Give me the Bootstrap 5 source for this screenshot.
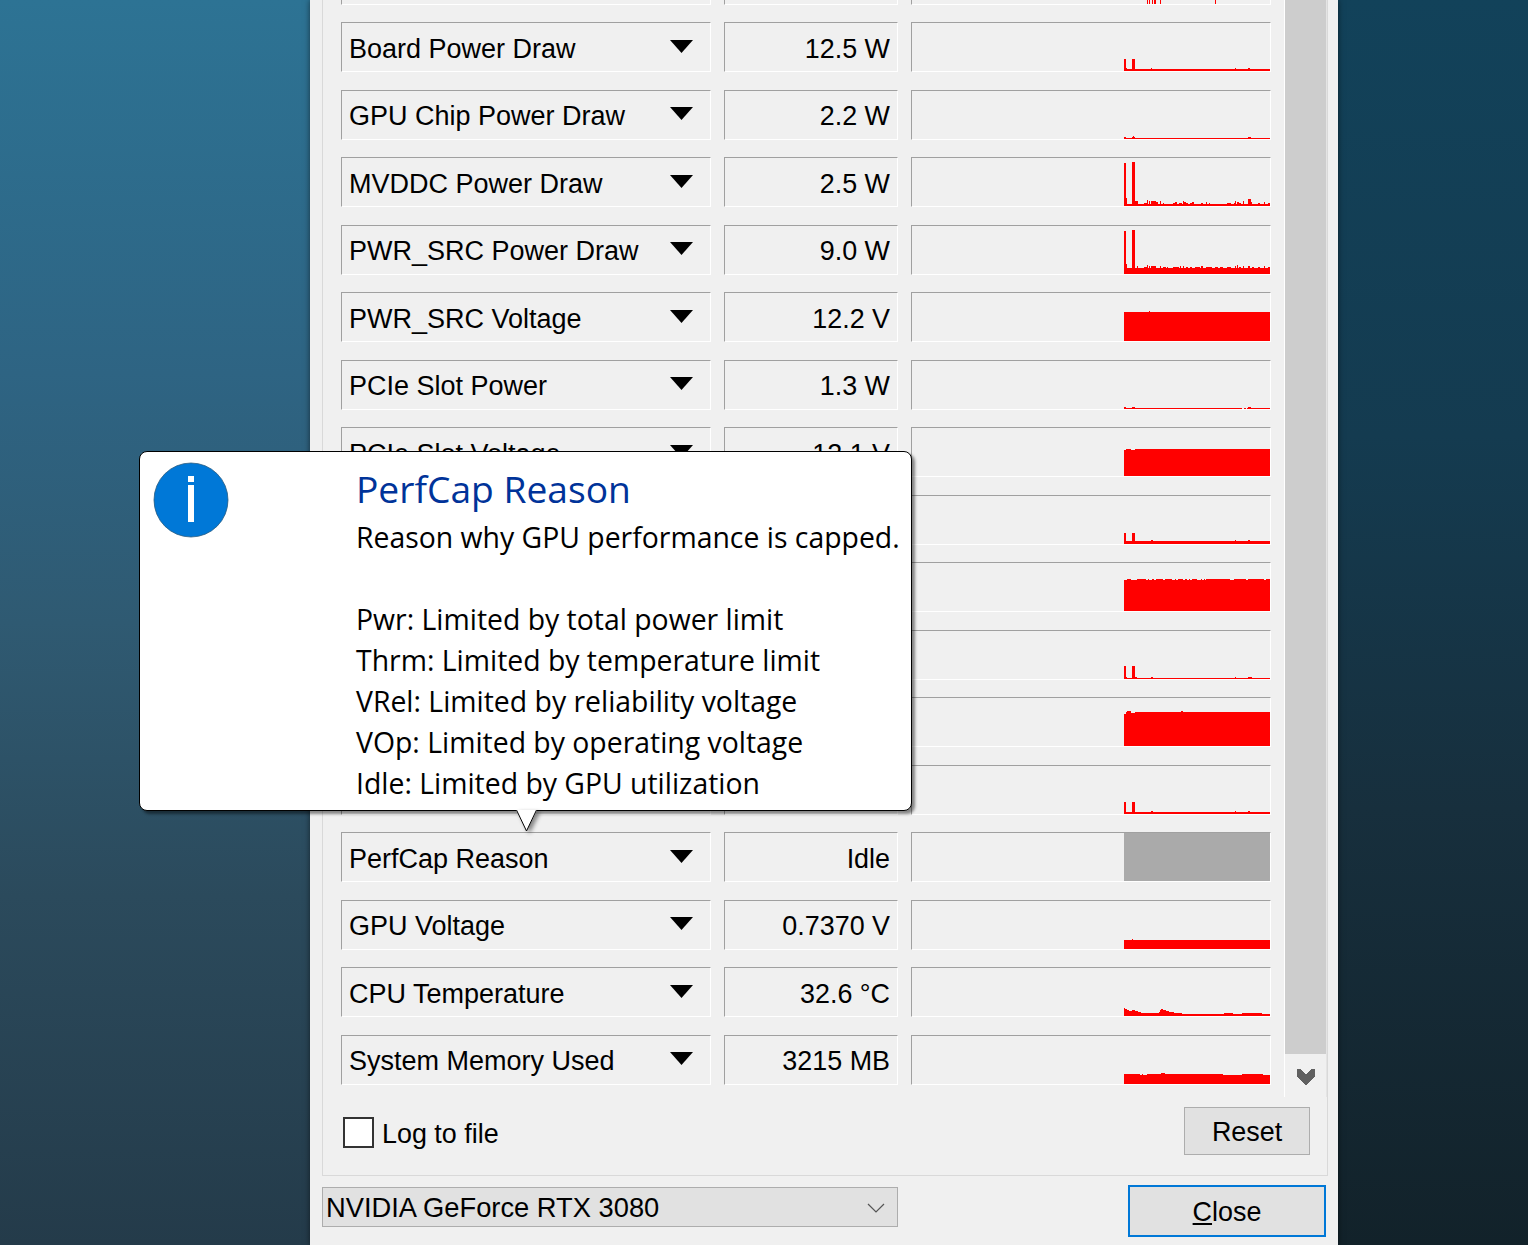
<!DOCTYPE html>
<html lang="en">
<head>
<meta charset="utf-8">
<title>GPU-Z Sensors</title>
<link href="https://cdn.jsdelivr.net/npm/bootstrap@5.3.0/dist/css/bootstrap.min.css" rel="stylesheet">
<style>
html,body{height:1245px;overflow:hidden}
body{font-family:"Liberation Sans",Arial,sans-serif;font-size:26.9px;color:#000;position:relative;
background:linear-gradient(180deg,#2d7394 0%,#2e6483 30%,#2f5a72 50%,#2b4a5c 72%,#243b4a 100%);}
.side-right{position:absolute;left:1338px;top:0;width:190px;height:1245px;background:linear-gradient(180deg,#12425a 0%,#143b50 35%,#172f3d 65%,#12222a 100%)}
.gpu-window{position:absolute;left:310px;top:0;width:1028px;height:1245px;background:#f0f0f0;overflow:hidden;box-shadow:0 0 6px rgba(0,0,0,.55)}
.group-box{margin:0 10px 0 12px;height:1176px;border:solid #d9d9d9;border-width:0 1px 1px 1px;overflow:hidden}
.scroll-zone{height:1097px;overflow:hidden}
.sensor-list{flex:1 1 auto;padding-left:18px;margin-top:-45.5px;gap:17.5px}
.sensor-line{height:50px;flex:none;gap:13px}
.s-cell{height:50px;border-top:1px solid #a0a0a0;border-left:1px solid #a0a0a0;border-right:1px solid #fff;border-bottom:1px solid #fff;flex:none;line-height:1}
.s-name{width:370px;padding:4px 17px 0 7px;font-size:27px}
.s-name svg{margin-bottom:6px}
.s-val{width:174px;padding:4px 7px 0 0}
.s-graph{width:360px;padding:0}
.s-graph svg{display:block}
.fake-scroll{width:43px;border-left:1px solid #fff;border-right:1px solid #e4e4e4;flex:none}
.fake-thumb{height:1054px;background:#cdcdcd}
.fake-arrow{height:43px;padding-top:15px}
.tool-row{height:78px;padding:10px 17px 0 20px}
.form-check .log-box{width:31px;height:31px;border:2px solid #333;border-radius:0;background-color:#fff;margin:10px 0 0 0;flex:none}
.log-label{margin-top:7px}
.gpu-btn{background:#e1e1e1;border:1px solid #adadad;border-radius:0;color:#000;font-size:26.9px;font-family:inherit;padding:3px 0 0;line-height:1}
.reset-btn{width:126px;height:48px}
.foot-row{padding:9px 12px 0 12px}
.gpu-combo{width:576px;height:40px;background:#e1e1e1;border:1px solid #adadad;padding:2px 12px 0 3px;margin-top:2px;line-height:1;font-size:27.3px}
.close-btn{width:198px;height:52px;border:2px solid #0078d7;margin-left:auto}
.close-btn:hover{background:#e1e1e1}
.perf-tip{position:absolute;left:139px;top:451px;width:773px;height:360px;background:#fff;border:1px solid #000;border-radius:8px;box-shadow:3px 3px 3px rgba(0,0,0,.45);font-family:"Open Sans","Noto Sans",sans-serif;z-index:5}
.tip-icon{position:absolute;left:13px;top:10px}
.tip-body{position:absolute;left:216px;top:11px;white-space:nowrap}
.tip-title{font-size:37.2px;line-height:52px;color:#003399;margin-bottom:2px}
.tip-text{font-size:28.38px;line-height:41px;color:#000}
.tip-tail{position:absolute;left:375px;top:358px;filter:drop-shadow(3px 2px 2px rgba(0,0,0,.45))}
</style>
</head>
<body>
<div class="side-right"></div>
<div class="gpu-window d-flex flex-column">
 <div class="group-box d-flex flex-column">
  <div class="scroll-zone d-flex flex-row">
   <div class="sensor-list d-flex flex-column">

    <div class="sensor-line d-flex">
     <div class="s-cell s-name"></div>
     <div class="s-cell s-val"></div>
     <div class="s-cell s-graph d-flex justify-content-end align-items-end"><svg width="146" height="48" shape-rendering="crispEdges"><path fill="#f00" d="M23 48v-5h1v5zM25 48v-5h1v5zM28 48v-5h1v5zM30 48v-4h2v4zM36 48v-5h1v5zM91 48v-5h1v5z"/></svg></div>
    </div>

    <div class="sensor-line d-flex">
     <div class="s-cell s-name d-flex align-items-center justify-content-between"><span>Board Power Draw</span><svg width="23" height="13"><polygon points="0,0 23,0 11.5,13"/></svg></div>
     <div class="s-cell s-val d-flex align-items-center justify-content-end">12.5 W</div>
     <div class="s-cell s-graph d-flex justify-content-end align-items-end"><svg width="146" height="48" shape-rendering="crispEdges"><path fill="#f00" d="M0 48v-2h146v2zM0 48v-12h2v12zM2 48v-3h1v3zM8 48v-12h3v12zM27 48v-3h1v3zM111 48v-3h1v3zM124 48v-3h2v3z"/></svg></div>
    </div>

    <div class="sensor-line d-flex">
     <div class="s-cell s-name d-flex align-items-center justify-content-between"><span>GPU Chip Power Draw</span><svg width="23" height="13"><polygon points="0,0 23,0 11.5,13"/></svg></div>
     <div class="s-cell s-val d-flex align-items-center justify-content-end">2.2 W</div>
     <div class="s-cell s-graph d-flex justify-content-end align-items-end"><svg width="146" height="48" shape-rendering="crispEdges"><path fill="#f00" d="M0 48v-1h146v1zM0 48v-2h2v2zM8 48v-2h3v2zM9 48v-3h1v3zM124 48v-2h3v2z"/></svg></div>
    </div>

    <div class="sensor-line d-flex">
     <div class="s-cell s-name d-flex align-items-center justify-content-between"><span>MVDDC Power Draw</span><svg width="23" height="13"><polygon points="0,0 23,0 11.5,13"/></svg></div>
     <div class="s-cell s-val d-flex align-items-center justify-content-end">2.5 W</div>
     <div class="s-cell s-graph d-flex justify-content-end align-items-end"><svg width="146" height="48" shape-rendering="crispEdges"><path fill="#f00" d="M0 48v-2h146v2zM0 48v-43h2v43zM2 48v-8h1v8zM8 48v-44h3v44zM11 48v-5h2v5zM13 48v-5h1v5zM20 48v-3h3v3zM23 48v-6h1v6zM25 48v-5h1v5zM27 48v-5h5v5zM32 48v-4h2v4zM36 48v-5h1v5zM39 48v-3h1v3zM49 48v-3h2v3zM51 48v-4h2v4zM55 48v-3h3v3zM59 48v-5h1v5zM60 48v-4h2v4zM62 48v-3h2v3zM66 48v-3h2v3zM68 48v-4h2v4zM77 48v-3h2v3zM82 48v-4h1v4zM85 48v-3h1v3zM103 48v-3h4v3zM110 48v-3h2v3zM111 48v-5h1v5zM113 48v-4h2v4zM115 48v-3h2v3zM119 48v-5h1v5zM124 48v-7h3v7zM127 48v-4h1v4zM134 48v-3h2v3zM140 48v-4h1v4zM144 48v-3h2v3z"/></svg></div>
    </div>

    <div class="sensor-line d-flex">
     <div class="s-cell s-name d-flex align-items-center justify-content-between"><span>PWR_SRC Power Draw</span><svg width="23" height="13"><polygon points="0,0 23,0 11.5,13"/></svg></div>
     <div class="s-cell s-val d-flex align-items-center justify-content-end">9.0 W</div>
     <div class="s-cell s-graph d-flex justify-content-end align-items-end"><svg width="146" height="48" shape-rendering="crispEdges"><path fill="#f00" d="M0 48v-6h146v6zM0 48v-43h2v43zM2 48v-10h1v10zM8 48v-44h3v44zM13 48v-8h1v8zM20 48v-7h3v7zM23 48v-9h1v9zM25 48v-8h1v8zM27 48v-8h5v8zM36 48v-8h1v8zM39 48v-7h3v7zM43 48v-7h1v7zM49 48v-7h6v7zM56 48v-8h1v8zM59 48v-8h1v8zM62 48v-7h2v7zM66 48v-7h2v7zM71 48v-7h5v7zM77 48v-8h2v8zM82 48v-7h6v7zM91 48v-7h3v7zM96 48v-7h3v7zM103 48v-7h4v7zM111 48v-8h1v8zM113 48v-9h1v9zM115 48v-7h2v7zM119 48v-8h1v8zM124 48v-8h2v8zM128 48v-7h2v7zM134 48v-7h2v7zM140 48v-8h1v8zM144 48v-7h2v7z"/></svg></div>
    </div>

    <div class="sensor-line d-flex">
     <div class="s-cell s-name d-flex align-items-center justify-content-between"><span>PWR_SRC Voltage</span><svg width="23" height="13"><polygon points="0,0 23,0 11.5,13"/></svg></div>
     <div class="s-cell s-val d-flex align-items-center justify-content-end">12.2 V</div>
     <div class="s-cell s-graph d-flex justify-content-end align-items-end"><svg width="146" height="48" shape-rendering="crispEdges"><path fill="#f00" d="M0 48v-29h146v29zM25 48v-30h1v30z"/></svg></div>
    </div>

    <div class="sensor-line d-flex">
     <div class="s-cell s-name d-flex align-items-center justify-content-between"><span>PCIe Slot Power</span><svg width="23" height="13"><polygon points="0,0 23,0 11.5,13"/></svg></div>
     <div class="s-cell s-val d-flex align-items-center justify-content-end">1.3 W</div>
     <div class="s-cell s-graph d-flex justify-content-end align-items-end"><svg width="146" height="48" shape-rendering="crispEdges"><path fill="#f00" d="M0 48v-1h118v1zM120 48v-1h2v1zM123 48v-1h23v1zM0 48v-2h2v2zM8 48v-2h3v2zM124 48v-2h3v2z"/></svg></div>
    </div>

    <div class="sensor-line d-flex">
     <div class="s-cell s-name d-flex align-items-center justify-content-between"><span>PCIe Slot Voltage</span><svg width="23" height="13"><polygon points="0,0 23,0 11.5,13"/></svg></div>
     <div class="s-cell s-val d-flex align-items-center justify-content-end">12.1 V</div>
     <div class="s-cell s-graph d-flex justify-content-end align-items-end"><svg width="146" height="48" shape-rendering="crispEdges"><path fill="#f00" d="M0 48v-26h146v26zM2 48v-27h5v27zM11 48v-27h135v27z"/></svg></div>
    </div>

    <div class="sensor-line d-flex">
     <div class="s-cell s-name"></div><div class="s-cell s-val"></div>
     <div class="s-cell s-graph d-flex justify-content-end align-items-end"><svg width="146" height="48" shape-rendering="crispEdges"><path fill="#f00" d="M0 48v-3h146v3zM0 48v-11h2v11zM8 48v-11h3v11zM27 48v-4h2v4zM111 48v-4h1v4zM124 48v-4h2v4z"/></svg></div>
    </div>

    <div class="sensor-line d-flex">
     <div class="s-cell s-name"></div><div class="s-cell s-val"></div>
     <div class="s-cell s-graph d-flex justify-content-end align-items-end"><svg width="146" height="48" shape-rendering="crispEdges"><path fill="#f00" d="M0 48v-31h146v31zM3 48v-32h4v32zM13 48v-32h9v32zM24 48v-32h1v32zM28 48v-32h2v32zM32 48v-32h7v32zM41 48v-32h7v32zM51 48v-32h1v32zM54 48v-32h5v32zM61 48v-32h2v32zM65 48v-32h1v32zM68 48v-32h5v32zM77 48v-32h1v32zM80 48v-32h1v32zM82 48v-32h24v32zM110 48v-32h12v32zM124 48v-32h16v32zM142 48v-32h4v32z"/></svg></div>
    </div>

    <div class="sensor-line d-flex">
     <div class="s-cell s-name"></div><div class="s-cell s-val"></div>
     <div class="s-cell s-graph d-flex justify-content-end align-items-end"><svg width="146" height="48" shape-rendering="crispEdges"><path fill="#f00" d="M0 48v-1h146v1zM0 48v-13h2v13zM2 48v-2h1v2zM8 48v-13h3v13zM11 48v-2h2v2zM27 48v-2h2v2zM111 48v-2h1v2zM124 48v-2h4v2z"/></svg></div>
    </div>

    <div class="sensor-line d-flex">
     <div class="s-cell s-name"></div><div class="s-cell s-val"></div>
     <div class="s-cell s-graph d-flex justify-content-end align-items-end"><svg width="146" height="48" shape-rendering="crispEdges"><path fill="#f00" d="M0 48v-32h2v32zM2 48v-34h1v34zM3 48v-35h4v35zM7 48v-33h4v33zM11 48v-34h135v34zM57 48v-35h2v35z"/></svg></div>
    </div>

    <div class="sensor-line d-flex">
     <div class="s-cell s-name"></div><div class="s-cell s-val"></div>
     <div class="s-cell s-graph d-flex justify-content-end align-items-end"><svg width="146" height="48" shape-rendering="crispEdges"><path fill="#f00" d="M0 48v-2h146v2zM0 48v-12h2v12zM8 48v-12h3v12zM27 48v-3h2v3zM111 48v-3h1v3zM124 48v-3h2v3z"/></svg></div>
    </div>

    <div class="sensor-line d-flex">
     <div class="s-cell s-name d-flex align-items-center justify-content-between"><span>PerfCap Reason</span><svg width="23" height="13"><polygon points="0,0 23,0 11.5,13"/></svg></div>
     <div class="s-cell s-val d-flex align-items-center justify-content-end">Idle</div>
     <div class="s-cell s-graph d-flex justify-content-end align-items-end"><svg width="146" height="48" shape-rendering="crispEdges"><rect width="146" height="48" fill="#aaa"/></svg></div>
    </div>

    <div class="sensor-line d-flex">
     <div class="s-cell s-name d-flex align-items-center justify-content-between"><span>GPU Voltage</span><svg width="23" height="13"><polygon points="0,0 23,0 11.5,13"/></svg></div>
     <div class="s-cell s-val d-flex align-items-center justify-content-end">0.7370 V</div>
     <div class="s-cell s-graph d-flex justify-content-end align-items-end"><svg width="146" height="48" shape-rendering="crispEdges"><path fill="#f00" d="M0 48v-9h146v9zM8 48v-10h1v10z"/></svg></div>
    </div>

    <div class="sensor-line d-flex">
     <div class="s-cell s-name d-flex align-items-center justify-content-between"><span>CPU Temperature</span><svg width="23" height="13"><polygon points="0,0 23,0 11.5,13"/></svg></div>
     <div class="s-cell s-val d-flex align-items-center justify-content-end">32.6 °C</div>
     <div class="s-cell s-graph d-flex justify-content-end align-items-end"><svg width="146" height="48" shape-rendering="crispEdges"><path fill="#f00" d="M0 48v-8h1v8zM1 48v-7h2v7zM3 48v-6h2v6zM5 48v-5h3v5zM8 48v-6h3v6zM11 48v-5h3v5zM14 48v-4h3v4zM17 48v-3h18v3zM35 48v-4h1v4zM36 48v-6h1v6zM37 48v-7h2v7zM39 48v-6h3v6zM42 48v-5h3v5zM45 48v-4h5v4zM50 48v-3h8v3zM58 48v-2h88v2zM100 48v-3h9v3zM118 48v-3h20v3z"/></svg></div>
    </div>

    <div class="sensor-line d-flex">
     <div class="s-cell s-name d-flex align-items-center justify-content-between"><span>System Memory Used</span><svg width="23" height="13"><polygon points="0,0 23,0 11.5,13"/></svg></div>
     <div class="s-cell s-val d-flex align-items-center justify-content-end">3215 MB</div>
     <div class="s-cell s-graph d-flex justify-content-end align-items-end"><svg width="146" height="48" shape-rendering="crispEdges"><path fill="#f00" d="M0 48v-10h16v10zM16 48v-9h2v9zM18 48v-10h1v10zM19 48v-9h4v9zM23 48v-10h14v10zM37 48v-11h4v11zM41 48v-10h58v10zM99 48v-9h19v9zM118 48v-10h21v10zM139 48v-9h7v9z"/></svg></div>
    </div>

   </div>
   <div class="fake-scroll">
    <div class="fake-thumb"></div>
    <div class="fake-arrow d-flex justify-content-center"><svg width="18" height="16" shape-rendering="crispEdges"><polygon fill="#606060" points="0,0 4,0 9,6 14,0 18,0 18,8 9,16 0,8"/></svg></div>
   </div>
  </div>
  <div class="tool-row d-flex justify-content-between align-items-start">
   <div class="form-check d-flex align-items-start gap-2 m-0 p-0">
    <input class="form-check-input log-box" type="checkbox" id="logToFile">
    <label class="form-check-label log-label" for="logToFile">Log to file</label>
   </div>
   <button class="btn gpu-btn reset-btn" type="button">Reset</button>
  </div>
 </div>
 <div class="foot-row d-flex align-items-start">
  <div class="gpu-combo d-flex align-items-center justify-content-between"><span>NVIDIA GeForce RTX 3080</span><svg width="18" height="10"><polyline points="1,1 9,9 17,1" fill="none" stroke="#555" stroke-width="1.2"/></svg></div>
  <button class="btn gpu-btn close-btn" type="button"><u>C</u>lose</button>
 </div>
</div>

<div class="perf-tip">
 <svg class="tip-icon" width="76" height="76"><circle cx="38" cy="38" r="37" fill="#0078d7" stroke="#2a5c80" stroke-width=".8"/><rect x="35" y="14" width="6" height="6" fill="#fff"/><rect x="35" y="23" width="6" height="37" fill="#fff"/></svg>
 <div class="tip-body">
  <div class="tip-title">PerfCap Reason</div>
  <div class="tip-text">Reason why GPU performance is capped.<br><br>Pwr: Limited by total power limit<br>Thrm: Limited by temperature limit<br>VRel: Limited by reliability voltage<br>VOp: Limited by operating voltage<br>Idle: Limited by GPU utilization</div>
 </div>
 <svg class="tip-tail" width="24" height="23"><polygon points="1,0 22,0 11.5,21" fill="#fff"/><polyline points="1.5,0 11.5,21 21.5,0" fill="none" stroke="#000" stroke-width="1"/></svg>
</div>
<script src="https://cdn.jsdelivr.net/npm/bootstrap@5.3.0/dist/js/bootstrap.bundle.min.js"></script>
</body>
</html>
